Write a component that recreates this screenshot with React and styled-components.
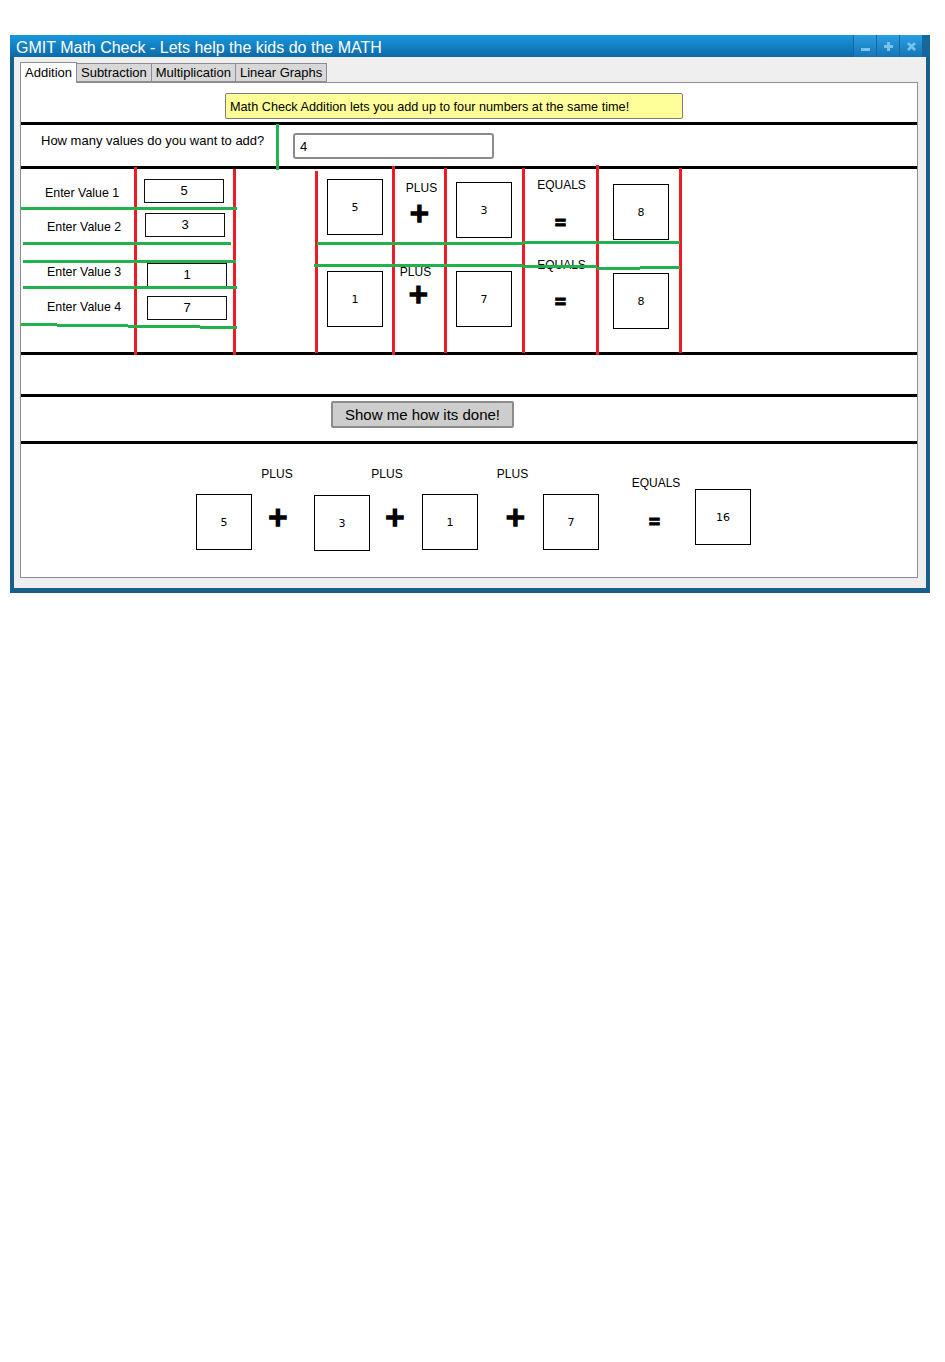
import React from "react";
import styled, { createGlobalStyle } from "styled-components";

const GlobalStyle = createGlobalStyle`
  body {
    margin: 0;
    background: #fff;
    font-family: "Liberation Sans", Arial, sans-serif;
  }
`;

const Page = styled.div`
  padding: 35px 0 0 10px;
`;

const Window = styled.div`
  width: 920px;
  background: #17608c;
  display: flex;
  flex-direction: column;
  padding-bottom: 5px;
`;

const TitleBar = styled.div`
  height: 22px;
  display: flex;
  align-items: center;
  padding: 0 8px 0 6px;
  background: linear-gradient(#1a98de, #0c69a8);
  box-shadow: inset -8px 0 0 #16679b;
  color: #fff;
  font-size: 16px;
  span {
    flex: 1;
    padding-top: 3px;
  }
`;

const Controls = styled.div`
  display: flex;
  height: 22px;
`;

const ControlButton = styled.div`
  width: 23px;
  height: 22px;
  display: flex;
  align-items: center;
  justify-content: center;
  background: linear-gradient(#2a9fe2, #1575b5);
  border-left: 1px solid #1268a3;
  box-sizing: border-box;
  svg {
    width: 11px;
    height: 11px;
  }
`;

const Body = styled.div`
  margin: 0 4px;
  background: #efefef;
  padding: 4px 8px 10px 6px;
`;

const Tabs = styled.div`
  display: flex;
  align-items: flex-end;
  height: 21px;
`;

const Tab = styled.div`
  height: ${(p) => (p.$active ? 21 : 19)}px;
  padding: 0 4px;
  box-sizing: border-box;
  border: 1px solid #8d8d95;
  border-bottom: ${(p) => (p.$active ? "none" : "1px solid #8d8d95")};
  background: ${(p) => (p.$active ? "#fff" : "#d8d8d8")};
  font-size: 13px;
  line-height: ${(p) => (p.$active ? 19 : 17)}px;
  color: #000;
  position: relative;
  z-index: ${(p) => (p.$active ? 2 : 1)};
  margin-bottom: ${(p) => (p.$active ? -1 : 0)}px;
  & + & {
    border-left: ${(p) => (p.$active ? "1px solid #8d8d95" : "none")};
  }
`;

const Panel = styled.div`
  background: #fff;
  border: 1px solid #8d8d95;
  display: flex;
  flex-direction: column;
`;

const Rule = styled.div`
  height: 3px;
  background: #000;
`;

const NoteSection = styled.div`
  height: 39px;
  box-sizing: border-box;
  padding: 10px 0 0 204px;
`;

const Note = styled.div`
  width: 458px;
  height: 26px;
  box-sizing: border-box;
  background: #ffff99;
  border: 1px solid #7d7d7d;
  border-radius: 2px;
  padding: 1px 0 0 4px;
  font-size: 12.7px;
  line-height: 24px;
`;

const QuestionSection = styled.div`
  position: relative;
  height: 41px;
  display: flex;
  align-items: flex-start;
  padding-left: 20px;
`;

const QuestionLabel = styled.div`
  width: 252px;
  margin-top: 8px;
  font-size: 13px;
  line-height: 16px;
`;

const CountInput = styled.div`
  margin-top: 8px;
  width: 201px;
  height: 26px;
  box-sizing: border-box;
  border: 2px solid #8b8b8b;
  border-radius: 3px;
  padding: 1px 0 0 5px;
  font-size: 13px;
  line-height: 22px;
`;

const Stroke = styled.div`
  position: absolute;
  left: ${(p) => p.$x}px;
  top: ${(p) => p.$y}px;
  width: ${(p) => p.$w}px;
  height: ${(p) => p.$h}px;
  background: ${(p) => (p.$red ? "#ed1c24" : "#22b14c")};
  pointer-events: none;
  z-index: 3;
`;

const GridSection = styled.div`
  position: relative;
  height: 183px;
  display: flex;
`;

const LeftColumn = styled.div`
  width: 306px;
  display: flex;
  flex-direction: column;
`;

const ValueRow = styled.div`
  display: flex;
  align-items: center;
  margin-top: ${(p) => p.$top}px;
`;

const ValueLabel = styled.div`
  box-sizing: border-box;
  width: ${(p) => p.$w}px;
  padding-left: ${(p) => p.$pad}px;
  margin-bottom: ${(p) => p.$raise * 2}px;
  font-size: 12.4px;
  line-height: 14px;
  transform: translateY(2px);
`;

const ValueBox = styled.div`
  width: 80px;
  height: 24px;
  box-sizing: border-box;
  border: 1px solid #111;
  text-align: center;
  font-size: 13px;
  line-height: 22px;
`;

const Equations = styled.div`
  display: flex;
  flex-direction: column;
`;

const EquationRow = styled.div`
  display: grid;
  grid-template-columns: 56px 73px 56px 101px 56px;
  align-items: start;
  height: ${(p) => p.$h}px;
`;

const Square = styled.div`
  width: 56px;
  height: 56px;
  box-sizing: border-box;
  border: 1px solid #000;
  margin-top: ${(p) => p.$top}px;
  display: flex;
  align-items: center;
  justify-content: center;
  font-family: "DejaVu Sans", Verdana, sans-serif;
  font-size: 11px;
`;

const OpCell = styled.div`
  display: flex;
  flex-direction: column;
  align-items: center;
  margin-top: ${(p) => p.$top}px;
`;

const OpLabel = styled.div`
  font-size: 12px;
  line-height: 14px;
  white-space: nowrap;
  transform: translateX(${(p) => p.$dx || 0}px);
`;

const Sign = styled.div`
  font-family: "DejaVu Sans", sans-serif;
  font-weight: 700;
  font-size: ${(p) => (p.$eq ? 20 : 26)}px;
  line-height: 20px;
  height: 20px;
  -webkit-text-stroke: ${(p) => (p.$eq ? 0.8 : 1.4)}px #000;
  margin-top: ${(p) => p.$gap}px;
  transform: translateX(${(p) => p.$dx || 0}px) scaleX(${(p) => (p.$eq ? 0.8 : 1)});
`;

const EmptySection = styled.div`
  height: 39px;
`;

const ButtonSection = styled.div`
  height: 44px;
  box-sizing: border-box;
  padding: 4px 0 0 310px;
`;

const ShowButton = styled.div`
  width: 183px;
  height: 27px;
  box-sizing: border-box;
  background: #cdcdcd;
  border: 2px solid #8c8c8c;
  border-radius: 2px;
  text-align: center;
  font-size: 15px;
  line-height: 23px;
`;

const SummarySection = styled.div`
  height: 133px;
  box-sizing: border-box;
  padding-left: 175px;
  display: grid;
  grid-template-columns: 56px 62px 56px 52px 56px 65px 56px 96px 56px;
  align-items: start;
`;

const values = [
  { label: "Enter Value 1", value: "5", top: 10, labelX: 45, boxX: 144, raise: 0 },
  { label: "Enter Value 2", value: "3", top: 10, labelX: 47, boxX: 145, raise: 0 },
  { label: "Enter Value 3", value: "1", top: 26, labelX: 47, boxX: 147, raise: 5 },
  { label: "Enter Value 4", value: "7", top: 9, labelX: 47, boxX: 147, raise: 3 },
];

// red dividers: [x, y, height]
const redLines = [
  [113, -2, 188],
  [212, 0, 186],
  [294, 2, 182],
  [371, -3, 189],
  [423, -1, 185],
  [501, -1, 185],
  [575, -4, 190],
  [658, -1, 185],
];

// green underlines: [x, y, width]
const greenLines = [
  [0, 38, 216],
  [2, 73, 208],
  [2, 91, 213],
  [2, 117, 214],
  [0, 154, 36],
  [36, 155, 71],
  [107, 156, 72],
  [179, 157, 37],
  [296, 73, 206],
  [502, 72, 157],
  [293, 95, 209],
  [502, 96, 74],
  [576, 98, 43],
  [619, 97, 40],
];

const MinIcon = () => (
  <svg viewBox="0 0 11 11">
    <rect x="1" y="7" width="9" height="3" fill="#79c3ea" />
  </svg>
);

const MaxIcon = () => (
  <svg viewBox="0 0 11 11">
    <rect x="1" y="4" width="9" height="3" fill="#79c3ea" />
    <rect x="4" y="1" width="3" height="9" fill="#79c3ea" />
  </svg>
);

const CloseIcon = () => (
  <svg viewBox="0 0 11 11">
    <path d="M2 2 L9 9 M9 2 L2 9" stroke="#79c3ea" strokeWidth="2.6" />
  </svg>
);

const App = () => {
  return (
    <Page>
      <GlobalStyle />
      <Window>
        <TitleBar>
          <span>GMIT Math Check - Lets help the kids do the MATH</span>
          <Controls>
            <ControlButton>
              <MinIcon />
            </ControlButton>
            <ControlButton>
              <MaxIcon />
            </ControlButton>
            <ControlButton>
              <CloseIcon />
            </ControlButton>
          </Controls>
        </TitleBar>
        <Body>
          <Tabs>
            <Tab $active>Addition</Tab>
            <Tab>Subtraction</Tab>
            <Tab>Multiplication</Tab>
            <Tab>Linear Graphs</Tab>
          </Tabs>
          <Panel>
            <NoteSection>
              <Note>Math Check Addition lets you add up to four numbers at the same time!</Note>
            </NoteSection>
            <Rule />
            <QuestionSection>
              <QuestionLabel>How many values do you want to add?</QuestionLabel>
              <CountInput>4</CountInput>
              <Stroke $x={255} $y={-1} $w={3} $h={46} />
            </QuestionSection>
            <Rule />
            <GridSection>
              <LeftColumn>
                {values.map((v) => (
                  <ValueRow key={v.label} $top={v.top}>
                    <ValueLabel $w={v.boxX - 21} $pad={v.labelX - 21} $raise={v.raise}>
                      {v.label}
                    </ValueLabel>
                    <ValueBox>{v.value}</ValueBox>
                  </ValueRow>
                ))}
              </LeftColumn>
              <Equations>
                <EquationRow $h={93}>
                  <Square $top={10}>5</Square>
                  <OpCell $top={12}>
                    <OpLabel $dx={2}>PLUS</OpLabel>
                    <Sign $gap={8}>+</Sign>
                  </OpCell>
                  <Square $top={13}>3</Square>
                  <OpCell $top={9}>
                    <OpLabel $dx={-1}>EQUALS</OpLabel>
                    <Sign $eq $gap={20} $dx={-2}>=</Sign>
                  </OpCell>
                  <Square $top={15}>8</Square>
                </EquationRow>
                <EquationRow $h={90}>
                  <Square $top={9}>1</Square>
                  <OpCell $top={3}>
                    <OpLabel $dx={-4}>PLUS</OpLabel>
                    <Sign $gap={5} $dx={-1}>+</Sign>
                  </OpCell>
                  <Square $top={9}>7</Square>
                  <OpCell $top={-4}>
                    <OpLabel $dx={-1}>EQUALS</OpLabel>
                    <Sign $eq $gap={19} $dx={-2}>=</Sign>
                  </OpCell>
                  <Square $top={11}>8</Square>
                </EquationRow>
              </Equations>
              {redLines.map(([x, y, h], i) => (
                <Stroke key={"r" + i} $red $x={x} $y={y} $w={3} $h={h} />
              ))}
              {greenLines.map(([x, y, w], i) => (
                <Stroke key={"g" + i} $x={x} $y={y} $w={w} $h={3} />
              ))}
            </GridSection>
            <Rule />
            <EmptySection />
            <Rule />
            <ButtonSection>
              <ShowButton>Show me how its done!</ShowButton>
            </ButtonSection>
            <Rule />
            <SummarySection>
              <Square $top={50}>5</Square>
              <OpCell $top={23}>
                <OpLabel $dx={-6}>PLUS</OpLabel>
                <Sign $gap={26} $dx={-5}>+</Sign>
              </OpCell>
              <Square $top={51}>3</Square>
              <OpCell $top={23}>
                <OpLabel $dx={-9}>PLUS</OpLabel>
                <Sign $gap={26} $dx={-1}>+</Sign>
              </OpCell>
              <Square $top={50}>1</Square>
              <OpCell $top={23}>
                <OpLabel $dx={2}>PLUS</OpLabel>
                <Sign $gap={26} $dx={5}>+</Sign>
              </OpCell>
              <Square $top={50}>7</Square>
              <OpCell $top={32}>
                <OpLabel $dx={9}>EQUALS</OpLabel>
                <Sign $eq $gap={21} $dx={7}>=</Sign>
              </OpCell>
              <Square $top={45}>16</Square>
            </SummarySection>
          </Panel>
        </Body>
      </Window>
    </Page>
  );
};

export default App;
